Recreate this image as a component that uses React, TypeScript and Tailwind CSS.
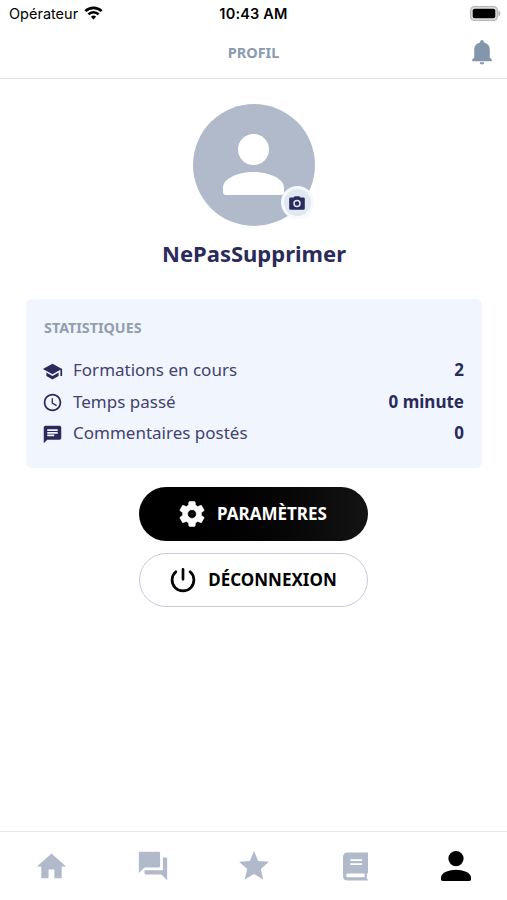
import React from 'react'
import {
  MdAccessTime,
  MdChat,
  MdForum,
  MdHome,
  MdSchool,
  MdStar,
} from 'react-icons/md'

interface IconProps {
  className?: string
}

const PersonIcon: React.FC<IconProps> = ({ className }) => (
  <svg viewBox="0 0 61 61" fill="currentColor" className={className}>
    <circle cx="30.5" cy="15.5" r="15.5" />
    <path d="M0 54C0 43.500 17 38 30.500 38S61 43.500 61 54v4q0 3-3 3H3q-3 0-3-3z" />
  </svg>
)

const BellIcon: React.FC<IconProps> = ({ className }) => (
  <svg viewBox="0 0 20 25" fill="currentColor" className={className}>
    <path d="M8.200 2.600V1.800a1.800 1.800 0 0 1 3.600 0v.8c3.900.8 6 3.600 6 7.200v7.900l1.900 1.900c.6.600.2 1.600-.7 1.600H1c-.9 0-1.300-1-.7-1.600l1.900-1.900V9.800c0-3.600 2.100-6.400 6-7.200zM7.800 22.200h4.400c0 1.300-1 2.300-2.200 2.300s-2.200-1-2.200-2.300z" />
  </svg>
)

const GearIcon: React.FC<IconProps> = ({ className }) => (
  <svg
    viewBox="0 0 24 24"
    fill="currentColor"
    stroke="currentColor"
    strokeWidth=".4"
    strokeLinejoin="round"
    className={className}
  >
    <path d="M19.430 12.980c.04-.32.07-.64.07-.98s-.03-.66-.07-.98l2.110-1.650c.19-.15.24-.42.12-.64l-2-3.460c-.12-.22-.39-.3-.61-.22l-2.490 1c-.52-.4-1.080-.73-1.690-.98l-.38-2.650C14.460 2.180 14.250 2 14 2h-4c-.25 0-.46.18-.49.42l-.38 2.650c-.61.25-1.170.59-1.690.98l-2.490-1c-.23-.09-.49 0-.61.22l-2 3.460c-.13.22-.07.49.12.64l2.110 1.650c-.04.32-.07.65-.07.98s.03.66.07.98l-2.110 1.650c-.19.15-.24.42-.12.64l2 3.460c.12.22.39.3.61.22l2.490-1c.52.4 1.080.73 1.690.98l.38 2.650c.03.24.24.42.49.42h4c.25 0 .46-.18.49-.42l.38-2.650c.61-.25 1.170-.59 1.690-.98l2.490 1c.23.09.49 0 .61-.22l2-3.460c.12-.22.07-.49-.12-.64l-2.110-1.650zM12 15.500c-1.930 0-3.500-1.570-3.500-3.500s1.570-3.500 3.500-3.500 3.500 1.570 3.500 3.500-1.570 3.500-3.500 3.500z" />
  </svg>
)

const CameraIcon: React.FC<IconProps> = ({ className }) => (
  <svg viewBox="0 0 16 14" className={className}>
    <path d="M1.500 1.500h3L5.800.200h4.400l1.300 1.300h3q1.300 0 1.300 1.300v9.700q0 1.300-1.300 1.300h-13Q.2 13.800.2 12.500V2.800q0-1.300 1.300-1.300z" fill="currentColor" />
    <circle cx="8" cy="7.600" r="3" fill="none" stroke="#e2e8f2" strokeWidth="1.500" />
  </svg>
)

const BookIcon: React.FC<IconProps> = ({ className }) => (
  <svg viewBox="0 0 25 29" fill="currentColor" fillRule="evenodd" className={className}>
    <path d="M4.500.500H25v20.300l-1.200 1.400v4.300l1.200 1.500v.6H4.500Q0 28.600 0 24V5Q0 .5 4.500.500zM7.300 7.300v1.800h11.900V7.300zM7.300 11.300v1.800h11.900v-1.800zM5 21.500a1.700 1.700 0 0 0 0 3.700h16.600v-3.700z" />
  </svg>
)

const PowerIcon: React.FC<IconProps> = ({ className }) => (
  <svg
    viewBox="0 0 26 26"
    fill="none"
    stroke="currentColor"
    strokeWidth="2.700"
    strokeLinecap="round"
    className={className}
  >
    <path d="M13 2.400v9.800M5.900 4.800a10.900 10.900 0 1 0 14.200 0" />
  </svg>
)

const WifiIcon: React.FC<IconProps> = ({ className }) => (
  <svg
    viewBox="0 0 18 14"
    fill="none"
    stroke="currentColor"
    strokeWidth="2.600"
    className={className}
  >
    <path d="M.9 5.200a11.500 11.500 0 0 1 16.200 0M3.900 8.300a7.200 7.200 0 0 1 10.200 0" />
    <path d="M9 13.600l-2.600-2.800a3.700 3.700 0 0 1 5.200 0z" fill="currentColor" stroke="none" />
  </svg>
)

const BatteryIcon: React.FC<IconProps> = ({ className }) => (
  <svg viewBox="0 0 31 15" className={className}>
    <rect x=".7" y=".7" width="26.600" height="13.600" rx="3.800" fill="#e4e4e4" stroke="#b5b5b5" strokeWidth="1.300" />
    <rect x="2.700" y="2.700" width="22.600" height="9.600" rx="1.800" fill="#000" />
    <path d="M28.400 4.500v6c2.600-1 2.600-5 0-6z" fill="#b5b5b5" />
  </svg>
)

const stats = [
  { label: 'Formations en cours', value: '2', icon: MdSchool },
  { label: 'Temps passé', value: '0 minute', icon: MdAccessTime },
  { label: 'Commentaires postés', value: '0', icon: MdChat },
]

const StatusBar = () => (
  <div className="grid grid-cols-3 items-center h-[27px] pl-[9px] pr-[6px] font-['Inter',sans-serif] text-[14.500px] text-black">
    <div className="flex items-center gap-[6px]">
      <span>Opérateur</span>
      <WifiIcon className="w-[19px] h-[14px] mb-[2px]" />
    </div>
    <span className="-ml-[3px] text-center font-semibold tracking-[0.2px]">10:43 AM</span>
    <BatteryIcon className="justify-self-end w-[31px] h-[15px]" />
  </div>
)

const Header = () => (
  <header className="grid grid-cols-3 items-center h-[52px] border-b border-[#e3e4e6] px-[15px]">
    <h1 className="col-start-2 text-center text-[14.500px] font-bold text-[#8a9bb0]">
      PROFIL
    </h1>
    <button className="justify-self-end text-[#8496ac]">
      <BellIcon className="w-[20px] h-[25px]" />
    </button>
  </header>
)

const TabBar = () => (
  <nav className="grid grid-cols-5 items-center justify-items-center h-[69px] border-t border-[#e8e8ea] pl-px text-[#b1bacb]">
    <MdHome className="size-[35px]" />
    <MdForum className="size-[34px]" />
    <MdStar className="size-[36px]" />
    <BookIcon className="w-[25px] h-[29px]" />
    <PersonIcon className="size-[30px] text-black" />
  </nav>
)

const App: React.FC = () => {
  return (
    <div className="flex flex-col h-screen bg-white font-['Noto_Sans',sans-serif]">
      <StatusBar />
      <Header />
      <main className="flex-1 flex flex-col items-center pl-[26px] pr-[25px] pt-[24px]">
        <div className="relative flex justify-center size-[122px] mt-px mr-px rounded-full bg-[#b1bacb] pt-[30px]">
          <PersonIcon className="size-[61px] text-white" />
          <button className="absolute right-px bottom-[7px] flex items-center justify-center size-[33px] rounded-full border-[3px] border-[#f6f9fe] bg-[#e2e8f2] text-[#2b2a5c]">
            <CameraIcon className="w-[16px] h-[14px]" />
          </button>
        </div>
        <h2 className="mt-[10px] leading-[34px] text-[22px] font-bold text-[#2b2a5c]">
          NePasSupprimer
        </h2>
        <section className="w-full h-[169px] mt-[29px] px-[18px] pt-[18px] rounded-md bg-[#f1f6fe]">
          <h3 className="leading-[22px] text-[14.300px] font-bold text-[#929eac]">
            STATISTIQUES
          </h3>
          <ul className="mt-[15px] text-[17px] text-[#43426f]">
            {stats.map(({ label, value, icon: Icon }) => (
              <li key={label} className="flex items-center h-[31.500px]">
                <Icon className="size-[21px] mt-[3px] -ml-[2px] mr-[10px] text-[#2b2a5c]" />
                <span>{label}</span>
                <span className="ml-auto font-bold text-[#2b2a5c]">{value}</span>
              </li>
            ))}
          </ul>
        </section>
        <button className="flex items-center justify-center gap-[10px] w-[229px] h-[54px] mt-[19px] mr-px pr-[3px] rounded-full bg-linear-to-r from-black to-[#141414] text-[17px] font-bold text-white">
          <GearIcon className="size-[30px]" />
          PARAMÈTRES
        </button>
        <button className="flex items-center justify-center gap-[12px] w-[229px] h-[54px] mt-[12px] mr-px rounded-full border-[1.500px] border-[#c8c9d9] text-[17px] font-bold text-black">
          <PowerIcon className="size-[26px]" />
          DÉCONNEXION
        </button>
      </main>
      <TabBar />
    </div>
  )
}

export default App
